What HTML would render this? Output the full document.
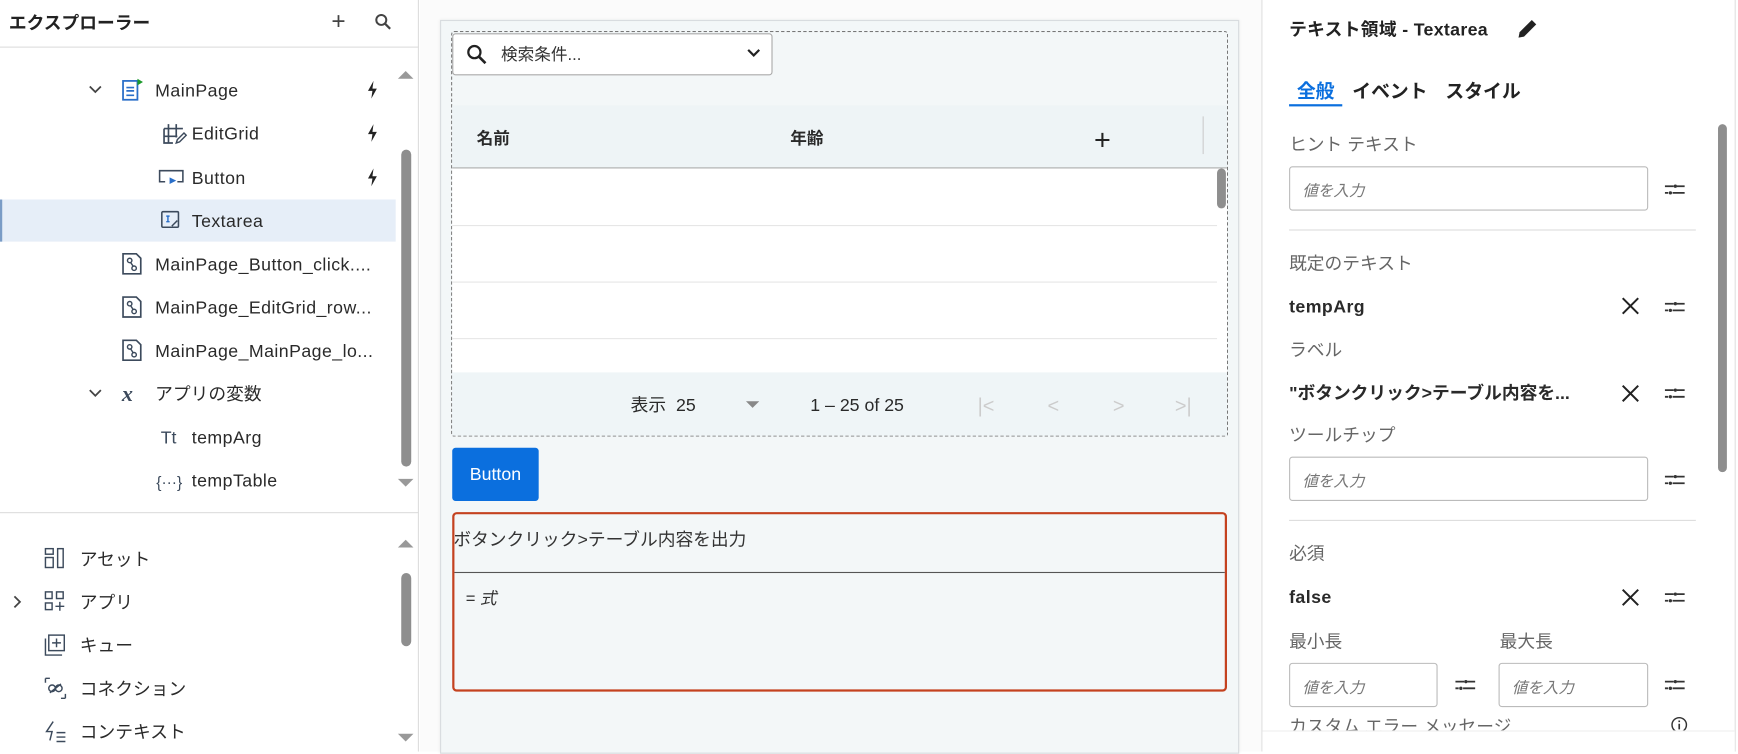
<!DOCTYPE html>
<html><head><meta charset="utf-8">
<style>
*{box-sizing:border-box;margin:0;padding:0}
html,body{width:1738px;height:751px;overflow:hidden;background:#fff}
#w{position:absolute;left:0;top:0;width:1568px;height:678px;transform:scale(1.1084);transform-origin:0 0;font-family:"Liberation Sans","Noto Sans CJK JP",sans-serif;color:#2a2a2a;font-size:16px}
.a{position:absolute;white-space:nowrap}
.t{line-height:20px;margin-top:2px}
.sb{position:absolute;background:#8e8e8e;border-radius:5px;width:9px}
.up{position:absolute;width:0;height:0;border-left:7px solid transparent;border-right:7px solid transparent;border-bottom:7px solid #999}
.dn{position:absolute;width:0;height:0;border-left:7px solid transparent;border-right:7px solid transparent;border-top:7px solid #999}
.bolt{position:absolute;width:10px;height:16px}
.inp{position:absolute;height:40px;border:1px solid #bbb;border-radius:3px;background:#fff;font-style:italic;color:#777;font-size:14px;padding:11px 0 0 11px}
.set{position:absolute;width:18px;height:12px}
.x{position:absolute;font-size:22px;color:#222;line-height:20px}
.lbl{color:#666;font-size:16px}
.lt{letter-spacing:0.4px}
</style></head><body><div id="w">
<!-- left panel -->
<div class="a" style="left:0;top:0;width:378px;height:678px;background:#fff;border-right:1px solid #ddd"></div>
<div class="a t" style="left:8px;top:10px;font-weight:bold;font-size:16px;color:#222">エクスプローラー</div>
<div class="a" style="left:299px;top:6px;font-size:22px;color:#444">+</div>
<svg class="a" style="left:338px;top:12px" width="16" height="16" viewBox="0 0 16 16"><circle cx="6" cy="6" r="4.5" fill="none" stroke="#444" stroke-width="1.8"/><path d="M9.5 9.5L14 14" stroke="#444" stroke-width="2"/></svg>
<div class="a" style="left:0;top:42px;width:378px;height:1px;background:#ddd"></div>
<div class="a" style="left:0;top:180px;width:357px;height:38px;background:#e6eef8;border-left:2px solid #7a9cc6"></div>
<svg class="a" style="left:80px;top:77px" width="12" height="8"><path d="M1 1l5 5 5-5" fill="none" stroke="#444" stroke-width="1.6"/></svg>
<svg class="a" style="left:109px;top:70px" width="22" height="22" viewBox="0 0 22 22"><rect x="2" y="3" width="13" height="17" fill="none" stroke="#2a6fc9" stroke-width="1.6"/><path d="M5 9h7M5 12h7M5 16h7" stroke="#2a6fc9" stroke-width="1.5"/><path d="M15 1l5 3-5 3z" fill="#1c9a2c"/></svg>
<div class="a t lt" style="left:140px;top:71px">MainPage</div>
<svg class="a" style="left:147px;top:110px" width="22" height="22" viewBox="0 0 22 22"><path d="M5 2v17M12 2v12M1 6h17M1 13h12M1 6v13h8" fill="none" stroke="#3c4a5c" stroke-width="1.5"/><path d="M12 19l1-3 6-6 2 2-6 6z" fill="none" stroke="#3c4a5c" stroke-width="1.3"/></svg>
<div class="a t lt" style="left:173px;top:110px">EditGrid</div>
<svg class="a" style="left:143px;top:152px" width="24" height="16" viewBox="0 0 24 16"><path d="M6 12H1V2h21v10h-5" fill="none" stroke="#3c4a5c" stroke-width="1.4"/><path d="M10 8l6 3-6 3z" fill="#2a6fc9"/></svg>
<div class="a t lt" style="left:173px;top:150px">Button</div>
<svg class="a" style="left:144px;top:189px" width="20" height="20" viewBox="0 0 20 20"><rect x="2" y="2" width="15" height="14" rx="1" fill="none" stroke="#3c4a5c" stroke-width="1.4"/><path d="M6 6h3M7.5 6v5M6 11h3" stroke="#2a6fc9" stroke-width="1.3"/><path d="M11 15l5-5" stroke="#3c4a5c" stroke-width="1.3"/></svg>
<div class="a t lt" style="left:173px;top:189px">Textarea</div>
<svg class="bolt" style="left:331px;top:73px" viewBox="0 0 10 16"><path d="M6 0L1 9h4l-1 7 5-9H5z" fill="#222"/></svg>
<svg class="bolt" style="left:331px;top:112px" viewBox="0 0 10 16"><path d="M6 0L1 9h4l-1 7 5-9H5z" fill="#222"/></svg>
<svg class="bolt" style="left:331px;top:152px" viewBox="0 0 10 16"><path d="M6 0L1 9h4l-1 7 5-9H5z" fill="#222"/></svg>
<svg class="a" style="left:109px;top:227px" width="20" height="22" viewBox="0 0 20 22"><path d="M2 2h12l4 4v14H2z" fill="none" stroke="#3c4a5c" stroke-width="1.5"/><circle cx="8" cy="8" r="2" fill="none" stroke="#3c4a5c" stroke-width="1.3"/><circle cx="12" cy="15" r="2" fill="none" stroke="#3c4a5c" stroke-width="1.3"/><path d="M9 10l2 3" stroke="#3c4a5c" stroke-width="1.3"/></svg>
<div class="a t lt" style="left:140px;top:228px">MainPage_Button_click....</div>
<svg class="a" style="left:109px;top:266px" width="20" height="22" viewBox="0 0 20 22"><path d="M2 2h12l4 4v14H2z" fill="none" stroke="#3c4a5c" stroke-width="1.5"/><circle cx="8" cy="8" r="2" fill="none" stroke="#3c4a5c" stroke-width="1.3"/><circle cx="12" cy="15" r="2" fill="none" stroke="#3c4a5c" stroke-width="1.3"/><path d="M9 10l2 3" stroke="#3c4a5c" stroke-width="1.3"/></svg>
<div class="a t lt" style="left:140px;top:267px">MainPage_EditGrid_row...</div>
<svg class="a" style="left:109px;top:305px" width="20" height="22" viewBox="0 0 20 22"><path d="M2 2h12l4 4v14H2z" fill="none" stroke="#3c4a5c" stroke-width="1.5"/><circle cx="8" cy="8" r="2" fill="none" stroke="#3c4a5c" stroke-width="1.3"/><circle cx="12" cy="15" r="2" fill="none" stroke="#3c4a5c" stroke-width="1.3"/><path d="M9 10l2 3" stroke="#3c4a5c" stroke-width="1.3"/></svg>
<div class="a t lt" style="left:140px;top:306px">MainPage_MainPage_lo...</div>
<svg class="a" style="left:80px;top:351px" width="12" height="8"><path d="M1 1l5 5 5-5" fill="none" stroke="#444" stroke-width="1.6"/></svg>
<div class="a t" style="left:110px;top:344px;font-family:'Liberation Serif',serif;font-style:italic;font-weight:bold;font-size:20px;color:#3c4a5c">x</div>
<div class="a t" style="left:140px;top:345px">アプリの変数</div>
<div class="a t" style="left:145px;top:384px;color:#3c4a5c">Tt</div>
<div class="a t lt" style="left:173px;top:384px">tempArg</div>
<div class="a t" style="left:141px;top:423px;color:#3c4a5c;font-size:14px">{···}</div>
<div class="a t lt" style="left:173px;top:423px">tempTable</div>
<div class="up" style="left:359px;top:64px"></div>
<div class="sb" style="left:362px;top:135px;height:286px"></div>
<div class="dn" style="left:359px;top:432px"></div>
<div class="a" style="left:0;top:462px;width:378px;height:1px;background:#ddd"></div>
<svg class="a" style="left:40px;top:494px" width="20" height="20" viewBox="0 0 20 20"><rect x="1" y="1" width="7" height="5" fill="none" stroke="#3c4a5c" stroke-width="1.3"/><rect x="1" y="9" width="7" height="9" fill="none" stroke="#3c4a5c" stroke-width="1.3"/><rect x="12" y="1" width="5" height="17" fill="none" stroke="#3c4a5c" stroke-width="1.3"/></svg>
<div class="a t" style="left:72px;top:494px">アセット</div>
<svg class="a" style="left:12px;top:537px" width="8" height="12"><path d="M1 1l5 5-5 5" fill="none" stroke="#444" stroke-width="1.6"/></svg>
<svg class="a" style="left:40px;top:533px" width="20" height="20" viewBox="0 0 20 20"><rect x="1" y="1" width="6" height="6" fill="none" stroke="#3c4a5c" stroke-width="1.3"/><rect x="11" y="1" width="6" height="6" fill="none" stroke="#3c4a5c" stroke-width="1.3"/><rect x="1" y="11" width="6" height="6" fill="none" stroke="#3c4a5c" stroke-width="1.3"/><path d="M14 10v8M10 14h8" stroke="#3c4a5c" stroke-width="1.3"/></svg>
<div class="a t" style="left:72px;top:533px">アプリ</div>
<svg class="a" style="left:40px;top:572px" width="20" height="20" viewBox="0 0 20 20"><rect x="4" y="1" width="14" height="14" fill="none" stroke="#3c4a5c" stroke-width="1.3"/><path d="M1 4v15h15M11 4v8M7 8h8" fill="none" stroke="#3c4a5c" stroke-width="1.3"/></svg>
<div class="a t" style="left:72px;top:572px">キュー</div>
<svg class="a" style="left:40px;top:611px" width="20" height="20" viewBox="0 0 20 20"><path d="M1 1h4M1 1v4M19 19h-4M19 19v-4M5 14l10-8" fill="none" stroke="#3c4a5c" stroke-width="1.3"/><circle cx="7" cy="10" r="3" fill="none" stroke="#3c4a5c" stroke-width="1.3"/><circle cx="13" cy="10" r="3" fill="none" stroke="#3c4a5c" stroke-width="1.3"/></svg>
<div class="a t" style="left:72px;top:611px">コネクション</div>
<svg class="a" style="left:40px;top:650px" width="20" height="20" viewBox="0 0 20 20"><path d="M8 1L2 10h5l-2 8M11 11h8M11 15h8M11 19h8" fill="none" stroke="#3c4a5c" stroke-width="1.3"/></svg>
<div class="a t" style="left:72px;top:650px">コンテキスト</div>
<div class="up" style="left:359px;top:487px"></div>
<div class="sb" style="left:362px;top:517px;height:66px"></div>
<div class="dn" style="left:359px;top:662px"></div>

<!-- center -->
<div class="a" style="left:379px;top:0;width:759px;height:678px;background:#fbfbfb"></div>
<div class="a" style="left:397px;top:18px;width:721px;height:662px;background:#f3f7f8;border:1px solid #d8dcdf;box-shadow:0 0 3px rgba(0,0,0,.08)"></div>
<div class="a" style="left:407px;top:28px;width:701px;height:366px;border:1px dashed #777;border-radius:3px"></div>
<div class="a" style="left:408px;top:30px;width:289px;height:38px;background:#fff;border:1px solid #aaa;border-radius:3px"></div>
<svg class="a" style="left:420px;top:39px" width="20" height="20" viewBox="0 0 20 20"><circle cx="8" cy="8" r="5.5" fill="none" stroke="#222" stroke-width="2"/><path d="M12 12l6 6" stroke="#222" stroke-width="2.4"/></svg>
<div class="a t" style="left:452px;top:38px;font-size:15px;color:#333">検索条件...</div>
<svg class="a" style="left:674px;top:44px" width="12" height="9"><path d="M1 1l5 5 5-5" fill="none" stroke="#222" stroke-width="2"/></svg>
<div class="a" style="left:408px;top:95px;width:699px;height:57px;background:#eef4f6;border-bottom:1px solid #aaa"></div>
<div class="a t" style="left:430px;top:114px;font-weight:bold;font-size:15px">名前</div>
<div class="a t" style="left:713px;top:114px;font-weight:bold;font-size:15px">年齢</div>
<div class="a" style="left:987px;top:111px;font-size:26px;line-height:30px;color:#222">+</div>
<div class="a" style="left:1085px;top:105px;width:1px;height:34px;background:#ccc"></div>
<div class="a" style="left:408px;top:152px;width:699px;height:184px;background:#fff"></div>
<div class="a" style="left:408px;top:203px;width:690px;height:1px;background:#e6e6e6"></div>
<div class="a" style="left:408px;top:254px;width:690px;height:1px;background:#e6e6e6"></div>
<div class="a" style="left:408px;top:305px;width:690px;height:1px;background:#e6e6e6"></div>
<div class="sb" style="left:1098px;top:152px;height:36px;width:8px"></div>
<div class="a" style="left:408px;top:336px;width:699px;height:57px;background:#eff5f7"></div>
<div class="a t" style="left:569px;top:355px;font-size:16px">表示&nbsp; 25</div>
<div class="dn" style="left:673px;top:362px;border-left-width:6px;border-right-width:6px;border-top-width:6px;border-top-color:#888"></div>
<div class="a t" style="left:731px;top:355px;font-size:16px">1 – 25 of 25</div>
<div class="a t" style="left:882px;top:354px;font-size:18px;color:#ccc">|&lt;</div>
<div class="a t" style="left:945px;top:354px;font-size:18px;color:#ccc">&lt;</div>
<div class="a t" style="left:1004px;top:354px;font-size:18px;color:#ccc">&gt;</div>
<div class="a t" style="left:1060px;top:354px;font-size:18px;color:#ccc">&gt;|</div>
<div class="a" style="left:408px;top:404px;width:78px;height:48px;background:#0b6fde;border-radius:3px;color:#fff;font-size:16px;text-align:center;line-height:50px">Button</div>
<div class="a" style="left:408px;top:462px;width:699px;height:162px;border:2px solid #c4421f;border-radius:4px"></div>
<div class="a t" style="left:409px;top:476px;font-size:16px;color:#333">ボタンクリック&gt;テーブル内容を出力</div>
<div class="a" style="left:410px;top:516px;width:695px;height:1px;background:#555"></div>
<div class="a t" style="left:420px;top:529px;font-size:15px;font-style:italic;color:#333">= 式</div>

<!-- right -->
<div class="a" style="left:1138px;top:0;width:1px;height:678px;background:#e0e0e0"></div>
<div class="a" style="left:1565px;top:0;width:1px;height:678px;background:#e0e0e0"></div>
<div class="a t" style="left:1163px;top:16px;font-weight:bold;font-size:16px;color:#222;letter-spacing:0.3px">テキスト領域 - Textarea</div>
<svg class="a" style="left:1367px;top:15px" width="22" height="22" viewBox="0 0 22 22"><path d="M3 19l1-5L15 3l4 4L8 18z" fill="#222"/></svg>
<div class="a t" style="left:1170px;top:71px;font-weight:bold;font-size:17px;color:#0b6fde">全般</div>
<div class="a" style="left:1163px;top:94px;width:48px;height:2px;background:#0b6fde"></div>
<div class="a t" style="left:1220px;top:71px;font-weight:bold;font-size:17px;color:#222">イベント</div>
<div class="a t" style="left:1304px;top:71px;font-weight:bold;font-size:17px;color:#222">スタイル</div>
<div class="a t lbl" style="left:1163px;top:120px">ヒント テキスト</div>
<div class="inp" style="left:1163px;top:150px;width:324px">値を入力</div>
<div class="a" style="left:1163px;top:207px;width:367px;height:1px;background:#ddd"></div>
<div class="a t lbl" style="left:1163px;top:227px">既定のテキスト</div>
<div class="a t lt" style="left:1163px;top:266px;font-weight:bold">tempArg</div>
<div class="a t lbl" style="left:1163px;top:305px">ラベル</div>
<div class="a t" style="left:1163px;top:344px;font-weight:bold">"ボタンクリック&gt;テーブル内容を...</div>
<div class="a t lbl" style="left:1163px;top:382px">ツールチップ</div>
<div class="inp" style="left:1163px;top:412px;width:324px">値を入力</div>
<div class="a" style="left:1163px;top:469px;width:367px;height:1px;background:#ddd"></div>
<div class="a t lbl" style="left:1163px;top:489px">必須</div>
<div class="a t lt" style="left:1163px;top:528px;font-weight:bold">false</div>
<div class="a t lbl" style="left:1163px;top:568px">最小長</div>
<div class="a t lbl" style="left:1353px;top:568px">最大長</div>
<div class="inp" style="left:1163px;top:598px;width:134px">値を入力</div>
<div class="inp" style="left:1352px;top:598px;width:135px">値を入力</div>
<div class="a t lbl" style="left:1163px;top:645px">カスタム エラー メッセージ</div>
<svg class="a" style="left:1507px;top:646px" width="16" height="16"><circle cx="8" cy="8" r="6.5" fill="none" stroke="#333" stroke-width="1.3"/><path d="M8 7v5M8 4v1.5" stroke="#333" stroke-width="1.5"/></svg>
<div class="a" style="left:1139px;top:659px;width:426px;height:19px;background:#fff;border-top:1px solid #eee"></div>
<svg class="x" style="left:1463px;top:268px" width="16" height="16"><path d="M1 1l14 14M15 1L1 15" stroke="#222" stroke-width="1.8"/></svg>
<svg class="x" style="left:1463px;top:347px" width="16" height="16"><path d="M1 1l14 14M15 1L1 15" stroke="#222" stroke-width="1.8"/></svg>
<svg class="x" style="left:1463px;top:531px" width="16" height="16"><path d="M1 1l14 14M15 1L1 15" stroke="#222" stroke-width="1.8"/></svg>
<svg class="set" style="left:1502px;top:165px" viewBox="0 0 18 12"><path d="M0 3h8M11 3h7M0 9h3M7 9h11" stroke="#333" stroke-width="1.6"/><circle cx="9.5" cy="3" r="1.5" fill="#333"/><circle cx="5" cy="9" r="1.5" fill="#333"/></svg>
<svg class="set" style="left:1502px;top:271px" viewBox="0 0 18 12"><path d="M0 3h8M11 3h7M0 9h3M7 9h11" stroke="#333" stroke-width="1.6"/><circle cx="9.5" cy="3" r="1.5" fill="#333"/><circle cx="5" cy="9" r="1.5" fill="#333"/></svg>
<svg class="set" style="left:1502px;top:349px" viewBox="0 0 18 12"><path d="M0 3h8M11 3h7M0 9h3M7 9h11" stroke="#333" stroke-width="1.6"/><circle cx="9.5" cy="3" r="1.5" fill="#333"/><circle cx="5" cy="9" r="1.5" fill="#333"/></svg>
<svg class="set" style="left:1502px;top:427px" viewBox="0 0 18 12"><path d="M0 3h8M11 3h7M0 9h3M7 9h11" stroke="#333" stroke-width="1.6"/><circle cx="9.5" cy="3" r="1.5" fill="#333"/><circle cx="5" cy="9" r="1.5" fill="#333"/></svg>
<svg class="set" style="left:1502px;top:533px" viewBox="0 0 18 12"><path d="M0 3h8M11 3h7M0 9h3M7 9h11" stroke="#333" stroke-width="1.6"/><circle cx="9.5" cy="3" r="1.5" fill="#333"/><circle cx="5" cy="9" r="1.5" fill="#333"/></svg>
<svg class="set" style="left:1313px;top:612px" viewBox="0 0 18 12"><path d="M0 3h8M11 3h7M0 9h3M7 9h11" stroke="#333" stroke-width="1.6"/><circle cx="9.5" cy="3" r="1.5" fill="#333"/><circle cx="5" cy="9" r="1.5" fill="#333"/></svg>
<svg class="set" style="left:1502px;top:612px" viewBox="0 0 18 12"><path d="M0 3h8M11 3h7M0 9h3M7 9h11" stroke="#333" stroke-width="1.6"/><circle cx="9.5" cy="3" r="1.5" fill="#333"/><circle cx="5" cy="9" r="1.5" fill="#333"/></svg>
<div class="sb" style="left:1550px;top:112px;height:314px;width:8px"></div>
</div></body></html>
